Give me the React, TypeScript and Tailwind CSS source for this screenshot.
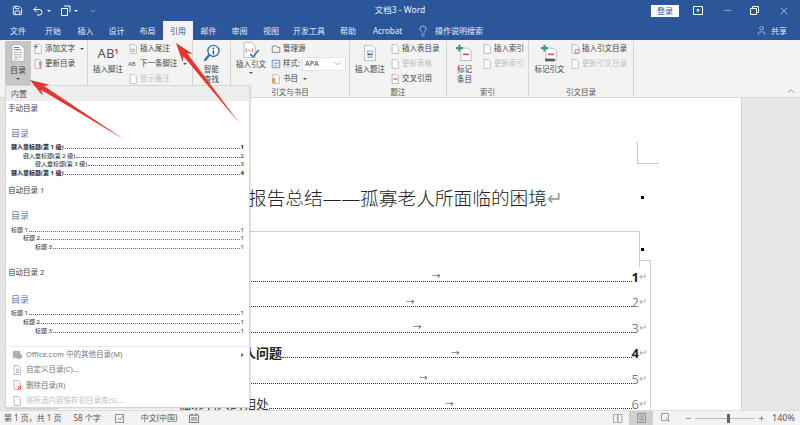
import type { ReactNode } from "react";
import { ChevronDown, ChevronUp, Lightbulb, Minus, Plus, Save, Undo2, User, X } from "lucide-react";

const TABS = [
  { name: "文件", w: 36 },
  { name: "开始", w: 34 },
  { name: "插入", w: 31 },
  { name: "设计", w: 31 },
  { name: "布局", w: 31 },
  { name: "引用", w: 30, active: true },
  { name: "邮件", w: 31 },
  { name: "审阅", w: 31 },
  { name: "视图", w: 32 },
  { name: "开发工具", w: 44 },
  { name: "帮助", w: 34 },
  { name: "Acrobat", w: 45 },
];

const CONTENTS = [
  { text: "", arrow: 374, num: "1", bold: true },
  { text: "", arrow: 348, num: "2" },
  { text: "", arrow: 355, num: "3" },
  { text: "三、孤寡老人问题", arrow: 393, num: "4", bold: true },
  { text: "", arrow: 361, num: "5" },
  { text: "孤寡老人的相处", arrow: 387, num: "6" },
];

function Page({ children, size = 10 }: { children?: ReactNode; size?: number }) {
  return (
    <svg width={size} height={size} viewBox="0 0 12 12" className="shrink-0">
      <path d="M2.5.5h5l2.5 2.5v8.5h-7.5z" fill="#fff" stroke="#9a9a9a" strokeWidth="0.8" />
      {children}
    </svg>
  );
}

function TocIcon() {
  return (
    <svg width="14" height="18" viewBox="0 0 19 25">
      <path d="M1 1h12l5 5v18H1z" fill="#fff" stroke="#a5a5a5" />
      <path d="M4 5h7M4 8h10" stroke="#4f81bd" strokeWidth="1.4" />
      <path d="M4 12h11M4 15h11M4 18h11M4 21h8" stroke="#8a8a8a" strokeWidth="1" strokeDasharray="6 1 4" />
    </svg>
  );
}

function MarkIcon({ base }: { base?: boolean }) {
  return (
    <svg width="18" height="18" viewBox="0 0 26 26">
      <path d="M7 6h11l4 4v14H7z" fill="#fff" stroke="#a5a5a5" />
      <path d="M10 15h9" stroke="#d9534f" strokeWidth="2.4" />
      {base && <path d="M6 21h14v4H6z" fill="#5c5c5c" />}
      <path d="M5 1v10M0 6h10" stroke="#3c9a76" strokeWidth="3" />
    </svg>
  );
}

function SmartIcon() {
  return (
    <svg width="18" height="18" viewBox="0 0 24 26">
      <circle cx="14" cy="10" r="8" fill="#fff" stroke="#2f74b5" strokeWidth="2" />
      <path d="M8 16l-6 7" stroke="#2f74b5" strokeWidth="3.4" strokeLinecap="round" />
      <circle cx="14" cy="6.2" r="1.3" fill="#444" />
      <path d="M14 9v6" stroke="#444" strokeWidth="2" />
    </svg>
  );
}

function CiteIcon() {
  return (
    <svg width="18" height="18" viewBox="0 0 26 26">
      <path d="M3 2h11l5 5v17H3z" fill="#fff" stroke="#a5a5a5" />
      <path d="M6 11v5M6 11h1M6 16h1M15 11v5M15 11h-1M15 16h-1M9 13.5h3" stroke="#d9534f" strokeWidth="1.1" fill="none" />
      <path d="M12 19l4 4 8-10" stroke="#2f74b5" strokeWidth="2.2" fill="none" />
    </svg>
  );
}

function CaptionIcon() {
  return (
    <svg width="14" height="18" viewBox="0 0 20 26">
      <path d="M2 2h11l5 5v17H2z" fill="#fff" stroke="#a5a5a5" />
      <path d="M6 10h8v6H6z" fill="#dfe7f2" stroke="#4f81bd" strokeWidth="0.8" />
      <path d="M6 16l3-3 2 2 1-1 2 2z" fill="#2b579a" />
      <path d="M6 19h8" stroke="#777" strokeWidth="1.4" />
    </svg>
  );
}

function Caret() {
  return <span className="w-0 h-0 border-x-[2px] border-x-transparent border-t-[2px] border-t-[#555]" />;
}

function Big({ icon, lines, caret, width }: { icon: ReactNode; lines: string[]; caret?: boolean; width: string }) {
  return (
    <div className={`flex flex-col items-center shrink-0 ${width}`}>
      <div className="h-[23px] flex items-center justify-center">{icon}</div>
      {lines.map((l) => (
        <span key={l} className="text-[7.5px] leading-[10px] text-[#444] whitespace-nowrap">
          {l}
        </span>
      ))}
      {caret && (
        <span className="mt-[4px]">
          <Caret />
        </span>
      )}
    </div>
  );
}

function Small({ icon, children, off, caret }: { icon: ReactNode; children: ReactNode; off?: boolean; caret?: boolean }) {
  return (
    <div className={`h-[15px] flex items-center gap-[2px] text-[7.5px] whitespace-nowrap ${off ? "text-[#b5b5b5] opacity-80" : "text-[#444]"}`}>
      {icon}
      <span>{children}</span>
      {caret && (
        <span className="ml-[3px] flex">
          <Caret />
        </span>
      )}
    </div>
  );
}

function Group({ width, label, children }: { width: string; label?: string; children: ReactNode }) {
  return (
    <div className={`relative h-[55px] mt-[1px] shrink-0 border-r border-[#d4d4d4] ${width}`}>
      <div className="flex h-[45px]">{children}</div>
      {label && (
        <div className="absolute left-0 right-0 top-[45px] text-center text-[7.5px] leading-[13px] text-[#555]">{label}</div>
      )}
    </div>
  );
}

function TocRow({ text, num, indent, bold }: { text: string; num: string; indent: string; bold?: boolean }) {
  return (
    <div className={`h-[8.6px] flex items-center text-[6px] leading-[8px] text-[#222] ${indent} ${bold ? "font-bold" : ""}`}>
      <span className="whitespace-nowrap">{text}</span>
      <span className="flex-1 mx-[1px] mt-[3px] border-b border-dotted border-[#666]" />
      <span>{num}</span>
    </div>
  );
}

function TocPreview({ rows }: { rows: { text: string; num: string; indent: string; bold?: boolean }[] }) {
  return (
    <div className="pl-[5px] pr-[5px]">
      <div className="text-[9px] leading-[16px] text-[#6a7fb5] mb-[1px]">目录</div>
      {rows.map((r, i) => (
        <TocRow key={i} {...r} />
      ))}
    </div>
  );
}

function MenuItem({ icon, children, off, more }: { icon: ReactNode; children: ReactNode; off?: boolean; more?: boolean }) {
  return (
    <div className={`h-[15.4px] flex items-center pl-[2px] pr-[5px] text-[7.5px] ${off ? "text-[#c0c0c0]" : "text-[#777]"}`}>
      <span className="w-[18px] flex justify-center">{icon}</span>
      <span>{children}</span>
      {more && <span className="ml-auto w-0 h-0 border-y-[2.5px] border-y-transparent border-l-[3px] border-l-[#666]" />}
    </div>
  );
}

function TocMenu() {
  const levels = [
    { text: "标题 1", num: "1", indent: "" },
    { text: "标题 2", num: "1", indent: "pl-[12px]" },
    { text: "标题 3", num: "1", indent: "pl-[24px]" },
  ];
  return (
    <div className="absolute left-[5px] top-[85px] w-[245px] h-[323px] bg-white border border-[#d6d6d6] shadow-[1px_1px_2px_rgba(0,0,0,0.12)]">
      <div className="h-[15px] bg-[#eeeeee] pl-[5px] text-[8px] leading-[15px] text-[#555]">内置</div>
      <div className="pl-[2px] h-[14px] text-[7.5px] leading-[14px] text-[#444]">手动目录</div>
      <div className="mt-[11px]">
        <TocPreview
          rows={[
            { text: "键入章标题(第 1 级)", num: "1", indent: "", bold: true },
            { text: "键入章标题(第 2 级)", num: "2", indent: "pl-[12px]" },
            { text: "键入章标题(第 3 级)", num: "3", indent: "pl-[24px]" },
            { text: "键入章标题(第 1 级)", num: "4", indent: "", bold: true },
          ]}
        />
      </div>
      <div className="mt-[6px] pl-[2px] h-[14px] text-[7.5px] leading-[14px] text-[#444]">自动目录 1</div>
      <div className="mt-[11px]">
        <TocPreview rows={levels} />
      </div>
      <div className="mt-[14px] pl-[2px] h-[14px] text-[7.5px] leading-[14px] text-[#444]">自动目录 2</div>
      <div className="mt-[13px]">
        <TocPreview rows={levels} />
      </div>
      <div className="mt-[11px] border-t border-[#ececec]">
        <MenuItem
          more
          icon={
            <svg width="11" height="11" viewBox="0 0 12 12">
              <path d="M1 2h8v8H1z" fill="#aab4c4" />
              <circle cx="8" cy="8" r="3" fill="#c9a0a0" />
            </svg>
          }
        >
          Office.com 中的其他目录(M)
        </MenuItem>
        <MenuItem
          icon={
            <Page>
              <path d="M5 5h3M5 7h3M5 9h3" stroke="#4f81bd" strokeWidth="0.8" />
            </Page>
          }
        >
          自定义目录(C)...
        </MenuItem>
        <MenuItem
          icon={
            <Page>
              <path d="M7 7l4 4M11 7l-4 4" stroke="#d9342b" strokeWidth="1.2" />
            </Page>
          }
        >
          删除目录(R)
        </MenuItem>
        <MenuItem off icon={<Page />}>
          将所选内容保存到目录库(S)...
        </MenuItem>
      </div>
    </div>
  );
}

// snip-tool style red arrow, tapering away from the tip
function arrowPoints(tx: number, ty: number, ex: number, ey: number) {
  const len = Math.hypot(ex - tx, ey - ty);
  const dx = (ex - tx) / len;
  const dy = (ey - ty) / len;
  const at = (a: number, b: number) => `${tx + dx * a - dy * b},${ty + dy * a + dx * b}`;
  return [at(0, 0), at(19, 6.5), at(15, 2.4), `${ex},${ey}`, at(15, -2.4), at(19, -6.5)].join(" ");
}

export default function App() {
  return (
    <div className="relative w-[800px] h-[425px] overflow-hidden flex flex-col bg-[#e6e6e6] font-['Noto_Sans','Noto_Sans_CJK_SC',sans-serif]">
      {/* title bar */}
      <div className="h-[21px] shrink-0 bg-[#2b579a] flex items-center text-white text-[8.5px]">
        <div className="w-[240px] flex items-center pl-[12px] gap-[9px]">
          <Save size={11} />
          <span className="flex items-center gap-[3px]">
            <Undo2 size={12} />
            <span className="w-0 h-0 border-x-[2px] border-x-transparent border-t-[2px] border-t-white" />
          </span>
          <span className="flex items-center gap-[3px]">
            <svg width="11" height="11" viewBox="0 0 11 11" fill="none" stroke="#fff">
              <path d="M1.5 3.5h6v7h-6zM4 1h6v6" />
            </svg>
            <span className="w-0 h-0 border-x-[2px] border-x-transparent border-t-[2px] border-t-white" />
          </span>
          <ChevronDown size={8} className="ml-[2px] opacity-60" />
        </div>
        <div className="w-[320px] text-center text-[#eef2f8]">文档3 - Word</div>
        <div className="flex-1 flex items-center">
          <span className="ml-[91px] w-[28px] h-[12px] bg-white text-[#2b579a] text-[8px] leading-[12px] text-center">登录</span>
          <svg width="10" height="9" viewBox="0 0 10 9" fill="none" stroke="#fff" className="ml-[14px]">
            <path d="M.5.5h9v8h-9zM5 6V3M3.5 4.5L5 3l1.5 1.5" />
          </svg>
          <Minus size={11} strokeWidth={1} className="ml-[19px]" />
          <svg width="9" height="9" viewBox="0 0 9 9" fill="none" stroke="#fff" className="ml-[17px]">
            <path d="M.5 2.5h6v6h-6zM2.5 2.5v-2h6v6h-2" />
          </svg>
          <X size={12} strokeWidth={1.2} className="ml-[19px]" />
        </div>
      </div>

      {/* tabs */}
      <div className="h-[19px] shrink-0 bg-[#2b579a] flex items-stretch text-[8px] text-[#e4eaf4]">
        {TABS.map((t) => (
          <div
            key={t.name}
            className={`flex items-center justify-center whitespace-nowrap ${t.active ? "bg-[#f3f3f3] text-[#2b579a]" : ""}`}
            style={{ width: t.w }}
          >
            {t.name}
          </div>
        ))}
        <div className="flex items-center gap-[6px] ml-[7px]">
          <Lightbulb size={12} strokeWidth={1.2} />
          <span>操作说明搜索</span>
        </div>
        <div className="ml-auto mr-[13px] flex items-center gap-[4px]">
          <User size={11} strokeWidth={1.2} />
          <span>共享</span>
        </div>
      </div>

      {/* ribbon */}
      <div className="relative h-[58px] shrink-0 bg-[#f3f3f3] border-b border-[#d9d9d9] flex">
        <Group width="w-[88px]">
          <div className="ml-[5px] w-[26px] h-[45px] bg-[#c6c6c6] flex flex-col items-center pt-[3px]">
            <TocIcon />
            <span className="text-[8px] leading-[10px] text-[#444] mt-[3px]">目录</span>
            <span className="mt-[3px] flex">
              <Caret />
            </span>
          </div>
          <div className="ml-[2px]">
            <Small
              caret
              icon={
                <Page>
                  <path d="M1 3h5M3.5.5v5" stroke="#3c9a76" strokeWidth="1.4" />
                </Page>
              }
            >
              添加文字
            </Small>
            <Small
              icon={
                <Page>
                  <path d="M8.5 3v5M8.5 9v1.5" stroke="#d9342b" strokeWidth="1.4" />
                </Page>
              }
            >
              更新目录
            </Small>
          </div>
        </Group>
        <Group width="w-[105px]">
          <Big
            width="w-[40px]"
            lines={["插入脚注"]}
            icon={
              <span className="text-[13px] leading-[20px] text-[#555]">
                AB<sup className="text-[7px] text-[#d9342b] font-bold">1</sup>
              </span>
            }
          />
          <div>
            <Small
              icon={
                <Page>
                  <path d="M4.5 6h3v3h-3z" fill="none" stroke="#888" strokeWidth="0.8" />
                </Page>
              }
            >
              插入尾注
            </Small>
            <Small caret icon={<span className="w-[10px] text-[6px] leading-[10px] text-[#555]">AB</span>}>
              下一条脚注
            </Small>
            <Small off icon={<Page />}>
              显示备注
            </Small>
          </div>
        </Group>
        <Group width="w-[38px]">
          <Big width="w-full" lines={["智能", "查找"]} icon={<SmartIcon />} />
        </Group>
        <Group width="w-[119px]" label="引文与书目">
          <Big width="w-[40px]" lines={["插入引文"]} caret icon={<CiteIcon />} />
          <div>
            <Small
              icon={
                <svg width="10" height="10" viewBox="0 0 12 12" fill="none" stroke="#777">
                  <path d="M1.5 2.5h5l1 1.5h3v6h-9z" />
                </svg>
              }
            >
              管理源
            </Small>
            <div className="h-[15px] flex items-center gap-[2px] text-[7.5px] text-[#444]">
              <svg width="10" height="10" viewBox="0 0 12 12" fill="none" stroke="#4f81bd">
                <path d="M1.5 1.5h9v9h-9zM4 5h5M4 8h3" />
              </svg>
              <span className="whitespace-nowrap w-[17px]">样式:</span>
              <div className="w-[44px] h-[14px] bg-white border border-[#e4e4e4] flex items-center justify-between pl-[2px] pr-[2px]">
                <span>APA</span>
                <ChevronDown size={11} strokeWidth={1} className="text-[#555]" />
              </div>
            </div>
            <Small
              caret
              icon={
                <Page>
                  <path d="M1 5h4v6H1z" fill="#e0a050" />
                </Page>
              }
            >
              书目
            </Small>
          </div>
        </Group>
        <Group width="w-[97px]" label="题注">
          <Big width="w-[40px]" lines={["插入题注"]} icon={<CaptionIcon />} />
          <div>
            <Small icon={<Page />}>插入表目录</Small>
            <Small off icon={<Page />}>
              更新表格
            </Small>
            <Small
              icon={
                <Page>
                  <path d="M4 6h5" stroke="#d9342b" strokeWidth="1.2" />
                </Page>
              }
            >
              交叉引用
            </Small>
          </div>
        </Group>
        <Group width="w-[82px]" label="索引">
          <Big width="w-[35px]" lines={["标记", "条目"]} icon={<MarkIcon />} />
          <div>
            <Small icon={<Page />}>插入索引</Small>
            <Small off icon={<Page />}>
              更新索引
            </Small>
          </div>
        </Group>
        <Group width="w-[105px]" label="引文目录">
          <Big width="w-[41px]" lines={["标记引文"]} icon={<MarkIcon base />} />
          <div>
            <Small
              icon={
                <Page>
                  <path d="M6 7h5v4H6z" fill="#fff" stroke="#d9342b" strokeWidth="0.8" />
                </Page>
              }
            >
              插入引文目录
            </Small>
            <Small off icon={<Page />}>
              更新引文目录
            </Small>
          </div>
        </Group>
        <ChevronUp size={12} strokeWidth={1.4} className="absolute right-[3px] bottom-0 text-[#777]" />
      </div>

      {/* document */}
      <div className="flex-1 min-h-0 overflow-hidden">
        <div className="relative ml-[58px] w-[684px] h-full bg-white border-r border-[#d2d2d2]">
          <div className="absolute left-[579px] top-[44px] w-[21px] h-[22px] border-l border-b border-[#c9c9c9]" />
          <span className="absolute left-[583px] top-[98px] w-[3px] h-[3px] bg-black" />
          <span className="absolute left-[583px] top-[150px] w-[3px] h-[3px] bg-black" />

          <div className="pt-[87px] pl-[190px] h-[133px] text-[18.7px] leading-[26px] font-light text-[#222] whitespace-nowrap">
            报告总结——孤寡老人所面临的困境<span className="text-[#999]">↵</span>
          </div>

          <div className="w-[582px] h-[36px] border-t border-r border-[#cfcfcf]" />
          <div className="relative w-[593px] pl-[120px] pr-[3px] border-r border-[#cfcfcf]">
            <div className="absolute right-0 top-0 w-[11px] border-t border-[#cfcfcf]" />
            <div className="-mt-[7px]">
              {CONTENTS.map((r) => (
                <div
                  key={r.num}
                  className={`relative h-[25.5px] flex items-end text-[13px] leading-[19px] ${r.bold ? "font-bold text-[#222]" : "text-[#333]"}`}
                >
                  {r.text && <span className="whitespace-nowrap translate-y-[1px]">{r.text}</span>}
                  <span className="flex-1 mb-[4px] border-b border-dotted border-[#333]" />
                  <span className={`translate-y-[1px] ${r.bold ? "" : "text-[#555] font-light"}`}>{r.num}</span>
                  <span className="text-[10px] font-normal text-[#aaa]">↵</span>
                  <span className="absolute top-[10px] text-[8.5px] leading-[12px] font-normal text-[#444]" style={{ left: r.arrow - 120 }}>
                    →
                  </span>
                </div>
              ))}
            </div>
          </div>
        </div>
      </div>

      {/* status bar */}
      <div className="relative h-[15px] shrink-0 bg-[#f3f3f3] border-t border-[#dedede] flex items-center text-[8px] text-[#555]">
        <span className="ml-[4px]">第 1 页，共 1 页</span>
        <span className="ml-[12px]">58 个字</span>
        <svg width="10" height="9" viewBox="0 0 10 9" fill="none" stroke="#777" strokeWidth="0.8" className="ml-[14px]">
          <path d="M.5.5h8v8h-8zM3 4l2 2 4-5" />
        </svg>
        <span className="ml-[16px]">中文(中国)</span>
        <svg width="10" height="10" viewBox="0 0 10 10" fill="none" stroke="#666" strokeWidth="0.9" className="ml-[11px]">
          <path d="M.5 2h9v7.5h-9zM3 .5V3M7 .5V3M2 5h6M2 7h6" />
        </svg>
        <div className="ml-auto flex items-center">
          <svg width="10" height="9" viewBox="0 0 10 9" fill="none" stroke="#999" strokeWidth="0.8" className="mr-[6px]">
            <path d="M.5.5h4v8h-4zM5 .5h4v8H5z" />
          </svg>
          <span className="w-[24px] h-[14px] bg-[#d0d0d0] flex items-center justify-center">
            <svg width="9" height="10" viewBox="0 0 9 10" fill="none" stroke="#888" strokeWidth="0.9">
              <path d="M.5.5h8v9h-8zM2 3h5M2 5h5M2 7h5" />
            </svg>
          </span>
          <svg width="10" height="10" viewBox="0 0 10 10" fill="none" stroke="#888" strokeWidth="0.8" className="ml-[8px]">
            <path d="M.5.5h7v7h-7zM5 5l4 4" />
          </svg>
          <Minus size={7} className="ml-[14px]" />
          <span className="relative mx-[3px] w-[60px] h-[1px] bg-[#bbb]">
            <span className="absolute left-[32px] top-[-4px] w-[3px] h-[9px] bg-[#666]" />
          </span>
          <Plus size={7} />
          <span className="ml-[7px] mr-[5px] text-[9px]">140%</span>
        </div>
      </div>

      <TocMenu />

      <svg className="absolute inset-0 pointer-events-none" width="800" height="425">
        <polygon points={arrowPoints(30, 80, 125, 140)} fill="#e4352f" />
        <polygon points={arrowPoints(176, 43, 240, 124)} fill="#e4352f" />
      </svg>
    </div>
  );
}
